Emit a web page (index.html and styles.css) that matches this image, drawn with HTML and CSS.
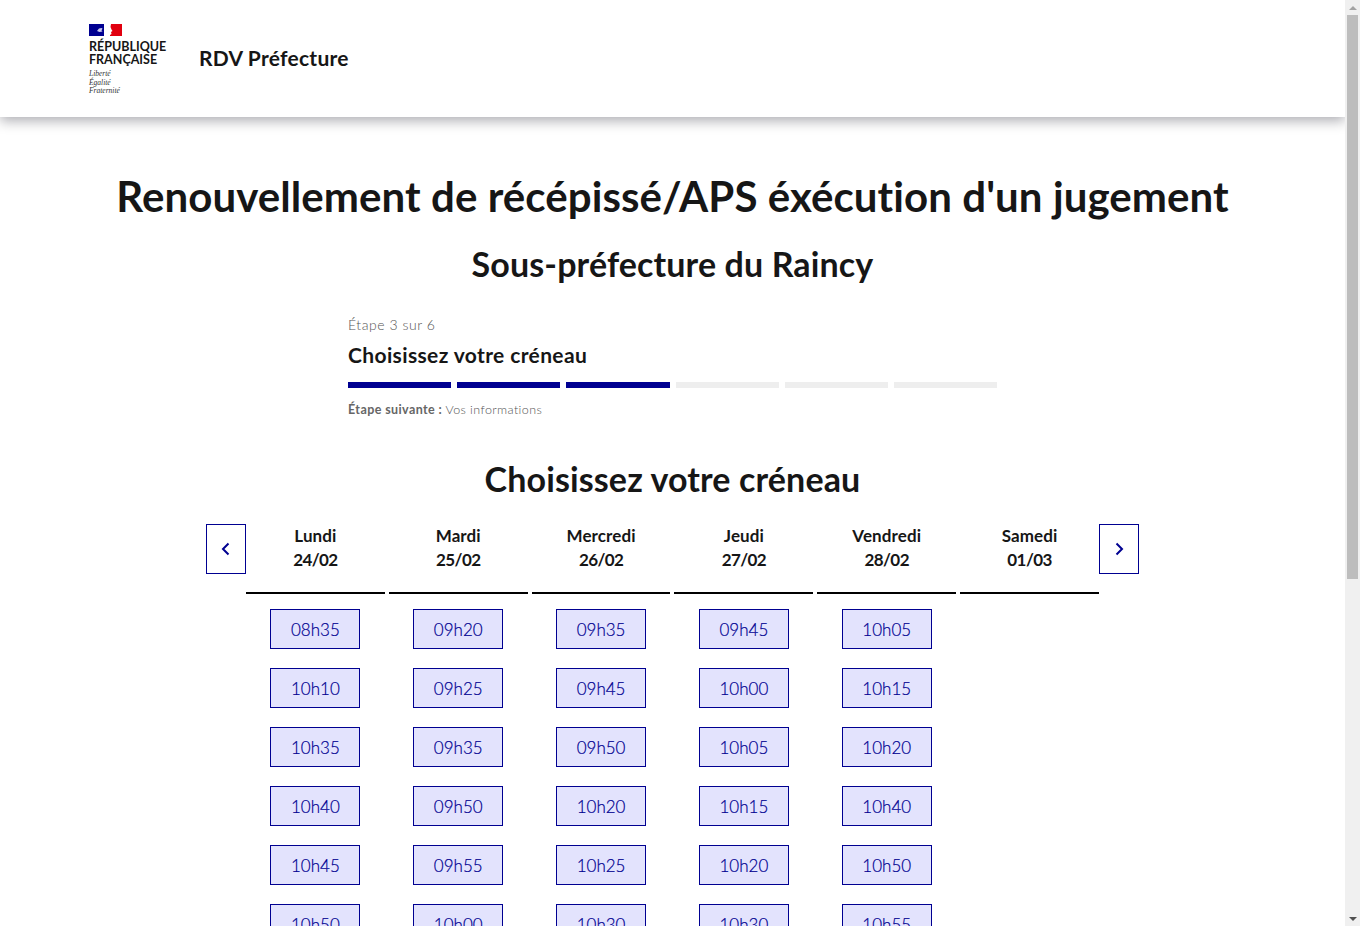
FILE: index.html
```html
<!DOCTYPE html>
<html lang="fr">
<head>
  <meta charset="UTF-8">
  <title>RDV Préfecture</title>
  <link rel="stylesheet" href="styles.css">
</head>
<body>
  <div class="page">
    <header class="site-header">
      <div class="logo">
        <svg class="flag" width="33" height="12" viewBox="0 0 33 12">
          <rect width="33" height="12" fill="#fff"/>
          <rect width="15" height="12" fill="#000091"/>
          <rect x="21" width="12" height="12" fill="#e1000f"/>
          <path d="M19 0h3l-.5 3 1 2.500 1 1.500-1.500 1 .5 2-3 2h-4l2-2-1-1 2-2-2-1 2-2z" fill="#fff"/>
          <path d="M8 7l2-2.500 2.500-.5 1 .5-1 2 1 1-3 .5z" fill="#c8c8ee"/>
        </svg>
        <p class="logo-name">RÉPUBLIQUE<br>FRANÇAISE</p>
        <p class="logo-motto">Liberté<br>Égalité<br>Fraternité</p>
      </div>
      <div class="site-name">RDV Préfecture</div>
    </header>

    <main>
      <h1>Renouvellement de récépissé/APS éxécution d'un jugement</h1>
      <h2 class="place">Sous-préfecture du Raincy</h2>

      <section class="stepper">
        <p class="step-count">Étape 3 sur 6</p>
        <h3>Choisissez votre créneau</h3>
        <div class="step-bars">
          <span class="on"></span><span class="on"></span><span class="on"></span><span></span><span></span><span></span>
        </div>
        <p class="step-next"><b>Étape suivante :</b> Vos informations</p>
      </section>

      <h2 class="slots-title">Choisissez votre créneau</h2>

      <section class="calendar">
        <button class="nav" aria-label="Précédent">
          <svg width="10" height="14" viewBox="0 0 10 14"><path d="M7.500 1.500 2 7l5.500 5.500" fill="none" stroke="#000091" stroke-width="2"/></svg>
        </button>
        <div class="days">
          <div class="day">
            <div class="day-head">Lundi<span class="day-date">24/02</span></div>
            <a class="slot">08h35</a><a class="slot">10h10</a><a class="slot">10h35</a><a class="slot">10h40</a><a class="slot">10h45</a><a class="slot">10h50</a>
          </div>
          <div class="day">
            <div class="day-head">Mardi<span class="day-date">25/02</span></div>
            <a class="slot">09h20</a><a class="slot">09h25</a><a class="slot">09h35</a><a class="slot">09h50</a><a class="slot">09h55</a><a class="slot">10h00</a>
          </div>
          <div class="day">
            <div class="day-head">Mercredi<span class="day-date">26/02</span></div>
            <a class="slot">09h35</a><a class="slot">09h45</a><a class="slot">09h50</a><a class="slot">10h20</a><a class="slot">10h25</a><a class="slot">10h30</a>
          </div>
          <div class="day">
            <div class="day-head">Jeudi<span class="day-date">27/02</span></div>
            <a class="slot">09h45</a><a class="slot">10h00</a><a class="slot">10h05</a><a class="slot">10h15</a><a class="slot">10h20</a><a class="slot">10h30</a>
          </div>
          <div class="day">
            <div class="day-head">Vendredi<span class="day-date">28/02</span></div>
            <a class="slot">10h05</a><a class="slot">10h15</a><a class="slot">10h20</a><a class="slot">10h40</a><a class="slot">10h50</a><a class="slot">10h55</a>
          </div>
          <div class="day">
            <div class="day-head">Samedi<span class="day-date">01/03</span></div>
          </div>
        </div>
        <button class="nav" aria-label="Suivant">
          <svg width="10" height="14" viewBox="0 0 10 14"><path d="M2.500 1.500 8 7l-5.500 5.500" fill="none" stroke="#000091" stroke-width="2"/></svg>
        </button>
      </section>
    </main>
  </div>

  <div class="scrollbar" aria-hidden="true">
    <div class="scroll-btn"><span class="arrow-up"></span></div>
    <div class="scroll-thumb"></div>
    <div class="scroll-rest"></div>
    <div class="scroll-btn"><span class="arrow-down"></span></div>
  </div>
</body>
</html>
```

FILE: styles.css
```css
body {
  display: flex;
  height: 100vh;
  margin: 0;
  overflow: hidden;
  background-color: #fff;
  color: #161616;
  font-family: 'Lato', 'Noto Sans', sans-serif;
  font-variant-ligatures: none;
}

.page {
  flex: 1;
  min-width: 0;
  overflow: hidden;
}

/* the scrollbar the screenshot shows */
.scrollbar {
  display: flex;
  flex-direction: column;
  flex: none;
  width: 15px;
  background-color: #f0f0f0;
}

.scroll-btn {
  display: flex;
  align-items: center;
  justify-content: center;
  flex: none;
  height: 15px;
}

.arrow-up {
  border: 4px solid transparent;
  border-top: 0;
  border-bottom: 4px solid #a3a3a3;
}

.arrow-down {
  border: 4px solid transparent;
  border-bottom: 0;
  border-top: 4px solid #505050;
}

.scroll-thumb {
  flex: none;
  height: 564px;
  margin: 0 2px;
  background-color: #bdbdbd;
}

.scroll-rest {
  flex: 1;
}

.site-header {
  position: relative;
  display: flex;
  align-items: center;
  height: 117px;
  padding-left: 89px;
  background-color: #fff;
  box-shadow: 0 4px 12px rgba(0, 0, 18, 0.32);
}

.logo {
  width: 110px;
  padding-top: 1px;
}

.flag {
  display: block;
  margin-top: 2px;
}

.logo-name {
  margin: 4px 0 0;
  font-size: 12.500px;
  line-height: 13px;
  font-weight: 700;
}

.logo-motto {
  margin: 4px 0 0;
  font-family: 'Liberation Serif', serif;
  font-style: italic;
  font-size: 7.500px;
  line-height: 8.500px;
  color: #333;
}

.site-name {
  padding-bottom: 3px;
  font-size: 21px;
  font-weight: 700;
  letter-spacing: 0.25px;
}

main {
  padding: 53px 0 380px;
}

h1 {
  margin: 0;
  text-align: center;
  font-size: 42px;
  line-height: 52px;
  font-weight: 700;
  letter-spacing: 0.07px;
}

.place {
  margin: 22px 0 0;
  text-align: center;
  font-size: 34px;
  line-height: 40px;
  letter-spacing: 0.12px;
}

.stepper {
  width: 649px;
  margin: 29px auto 0;
}

.step-count {
  margin: 0;
  font-size: 14px;
  line-height: 24px;
  font-weight: 300;
  letter-spacing: 0.55px;
  color: #555;
}

.stepper h3 {
  margin: 4px 0 0;
  font-size: 21px;
  line-height: 28px;
  letter-spacing: 0.37px;
}

.step-bars {
  display: flex;
  gap: 6px;
  margin-top: 13px;
}

.step-bars span {
  flex: 1;
  height: 6px;
  background-color: #eee;
}

.step-bars span.on {
  background-color: #000091;
}

.step-next {
  margin: 12px 0 0;
  font-size: 12.500px;
  line-height: 20px;
  font-weight: 300;
  letter-spacing: 0.4px;
  color: #555;
}

.step-next b {
  font-weight: 700;
  color: #666;
}

.slots-title {
  margin: 39px 0 0;
  text-align: center;
  font-size: 34px;
  line-height: 40px;
  letter-spacing: 0.12px;
}

.calendar {
  display: flex;
  align-items: flex-start;
  width: 933px;
  margin: 25px auto 0;
}

.nav {
  display: flex;
  align-items: center;
  justify-content: center;
  flex: none;
  width: 40px;
  height: 50px;
  padding: 0;
  background: #fff;
  border: 1px solid #000091;
}

.days {
  display: flex;
  flex: 1;
  gap: 4px;
}

.day {
  display: flex;
  flex-direction: column;
  align-items: center;
  flex: 1;
}

.day-head {
  width: 100%;
  height: 68px;
  margin-bottom: 15px;
  border-bottom: 2px solid #000;
  text-align: center;
  font-size: 17px;
  line-height: 24px;
  font-weight: 700;
  letter-spacing: 0.1px;
}

.day-date {
  display: block;
  letter-spacing: -0.6px;
}

.slot {
  display: flex;
  align-items: center;
  justify-content: center;
  box-sizing: border-box;
  width: 90px;
  height: 40px;
  margin-bottom: 19px;
  background-color: #e3e3fd;
  border: 1px solid #000091;
  color: #000091;
  font-size: 17px;
  font-weight: 300;
  -webkit-text-stroke: 0.2px #000091;
}
```
